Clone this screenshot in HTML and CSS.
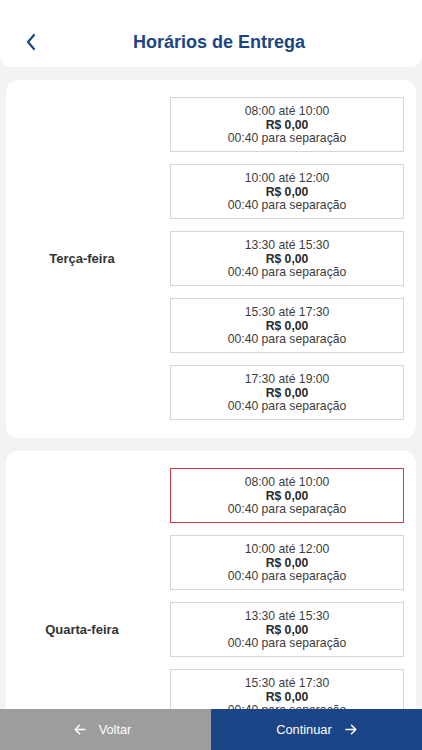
FILE: index.html
```html
<!DOCTYPE html>
<html lang="pt-BR">
<head>
    <meta charset="UTF-8">
    <meta name="viewport" content="width=device-width, initial-scale=1.0">
    <title>Horários de Entrega</title>
    <link rel="stylesheet" href="styles.css">
</head>
<body>
    <!-- Kopfzeile mit Zurück-Pfeil und Titel -->
    <header class="topbar">
        <button class="back" aria-label="Voltar">
            <svg width="12" height="18" viewBox="0 0 12 18"><path d="M9 2 L3 9 L9 16" fill="none" stroke="#1b4586" stroke-width="2.2" stroke-linecap="round" stroke-linejoin="round"/></svg>
        </button>
        <h1 class="title">Horários de Entrega</h1>
    </header>

    <main class="days">
        <!-- Tag 1 -->
        <section class="day">
            <div class="day-name">Terça-feira</div>
            <div class="slots">
                <div class="slot"><span>08:00 até 10:00</span><b>R$ 0,00</b><span>00:40 para separação</span></div>
                <div class="slot"><span>10:00 até 12:00</span><b>R$ 0,00</b><span>00:40 para separação</span></div>
                <div class="slot"><span>13:30 até 15:30</span><b>R$ 0,00</b><span>00:40 para separação</span></div>
                <div class="slot"><span>15:30 até 17:30</span><b>R$ 0,00</b><span>00:40 para separação</span></div>
                <div class="slot"><span>17:30 até 19:00</span><b>R$ 0,00</b><span>00:40 para separação</span></div>
            </div>
        </section>
        <!-- Tag 2 -->
        <section class="day">
            <div class="day-name">Quarta-feira</div>
            <div class="slots">
                <div class="slot selected"><span>08:00 até 10:00</span><b>R$ 0,00</b><span>00:40 para separação</span></div>
                <div class="slot"><span>10:00 até 12:00</span><b>R$ 0,00</b><span>00:40 para separação</span></div>
                <div class="slot"><span>13:30 até 15:30</span><b>R$ 0,00</b><span>00:40 para separação</span></div>
                <div class="slot"><span>15:30 até 17:30</span><b>R$ 0,00</b><span>00:40 para separação</span></div>
                <div class="slot"><span>17:30 até 19:00</span><b>R$ 0,00</b><span>00:40 para separação</span></div>
            </div>
        </section>
    </main>

    <!-- Fußleiste mit den beiden Buttons -->
    <footer class="actions">
        <button class="btn btn-back">
            <svg width="12" height="11" viewBox="0 0 12 11"><path d="M11 5.5 H1.2 M5.5 1.2 L1.2 5.5 L5.5 9.8" fill="none" stroke="#fff" stroke-width="1.5" stroke-linecap="round" stroke-linejoin="round"/></svg>
            Voltar
        </button>
        <button class="btn btn-next">
            Continuar
            <svg width="12" height="11" viewBox="0 0 12 11"><path d="M1 5.5 H10.8 M6.5 1.2 L10.8 5.5 L6.5 9.8" fill="none" stroke="#fff" stroke-width="1.5" stroke-linecap="round" stroke-linejoin="round"/></svg>
        </button>
    </footer>
</body>
</html>
```

FILE: styles.css
```css
/* Allgemein */
html, body {
    margin: 0;
    padding: 0;
    height: 100%;
}
body {
    background: #f3f3f3;
    font-family: "Liberation Sans", Arial, sans-serif;
    color: #333;
    overflow: hidden;
}

/* Kopfzeile */
.topbar {
    height: 67px;
    background: #fff;
    border-radius: 0 0 12px 12px;
    display: flex;
    align-items: center;
    justify-content: center;
    position: relative;
    padding: 18px 0 0 16px;
    box-sizing: border-box;
}
.back {
    position: absolute;
    left: 21px;
    top: 33px;
    border: 0;
    background: none;
    padding: 0;
    width: 20px;
    height: 20px;
}
.title {
    margin: 0;
    font-size: 18px;
    font-weight: 700;
    color: #1b4586;
}

/* Tage */
.days {
    padding: 13px 6px 0;
    display: flex;
    flex-direction: column;
    gap: 13px;
}
.day {
    background: #fff;
    border-radius: 12px;
    padding: 17px 12px 18px 0;
    display: flex;
    align-items: center;
    gap: 12px;
}
.day-name {
    width: 152px;
    text-align: center;
    font-size: 13px;
    font-weight: 700;
    color: #333;
}
.slots {
    flex: 1;
    display: flex;
    flex-direction: column;
    gap: 12px;
}
.slot {
    height: 55px;
    box-sizing: border-box;
    border: 1px solid #d6d6d6;
    padding-top: 2px;
    display: flex;
    flex-direction: column;
    align-items: center;
    justify-content: center;
    font-size: 12.2px;
    line-height: 13.5px;
    color: #3d3d3d;
}
.slot b {
    font-weight: 700;
    color: #2a2a2a;
}
.slot.selected {
    border-color: #d9384a;
}

/* Fußleiste */
.actions {
    position: fixed;
    left: 0;
    right: 0;
    bottom: 0;
    height: 41px;
    display: flex;
}
.btn {
    width: 50%;
    box-sizing: border-box;
    border: 0;
    color: #fff;
    font-family: inherit;
    font-size: 12.8px;
    display: flex;
    align-items: center;
    justify-content: center;
    gap: 13px;
}
.btn-back {
    background: #9d9d9d;
    padding-right: 12px;
}
.btn-next {
    background: #1b4586;
    padding-left: 6px;
}
```
